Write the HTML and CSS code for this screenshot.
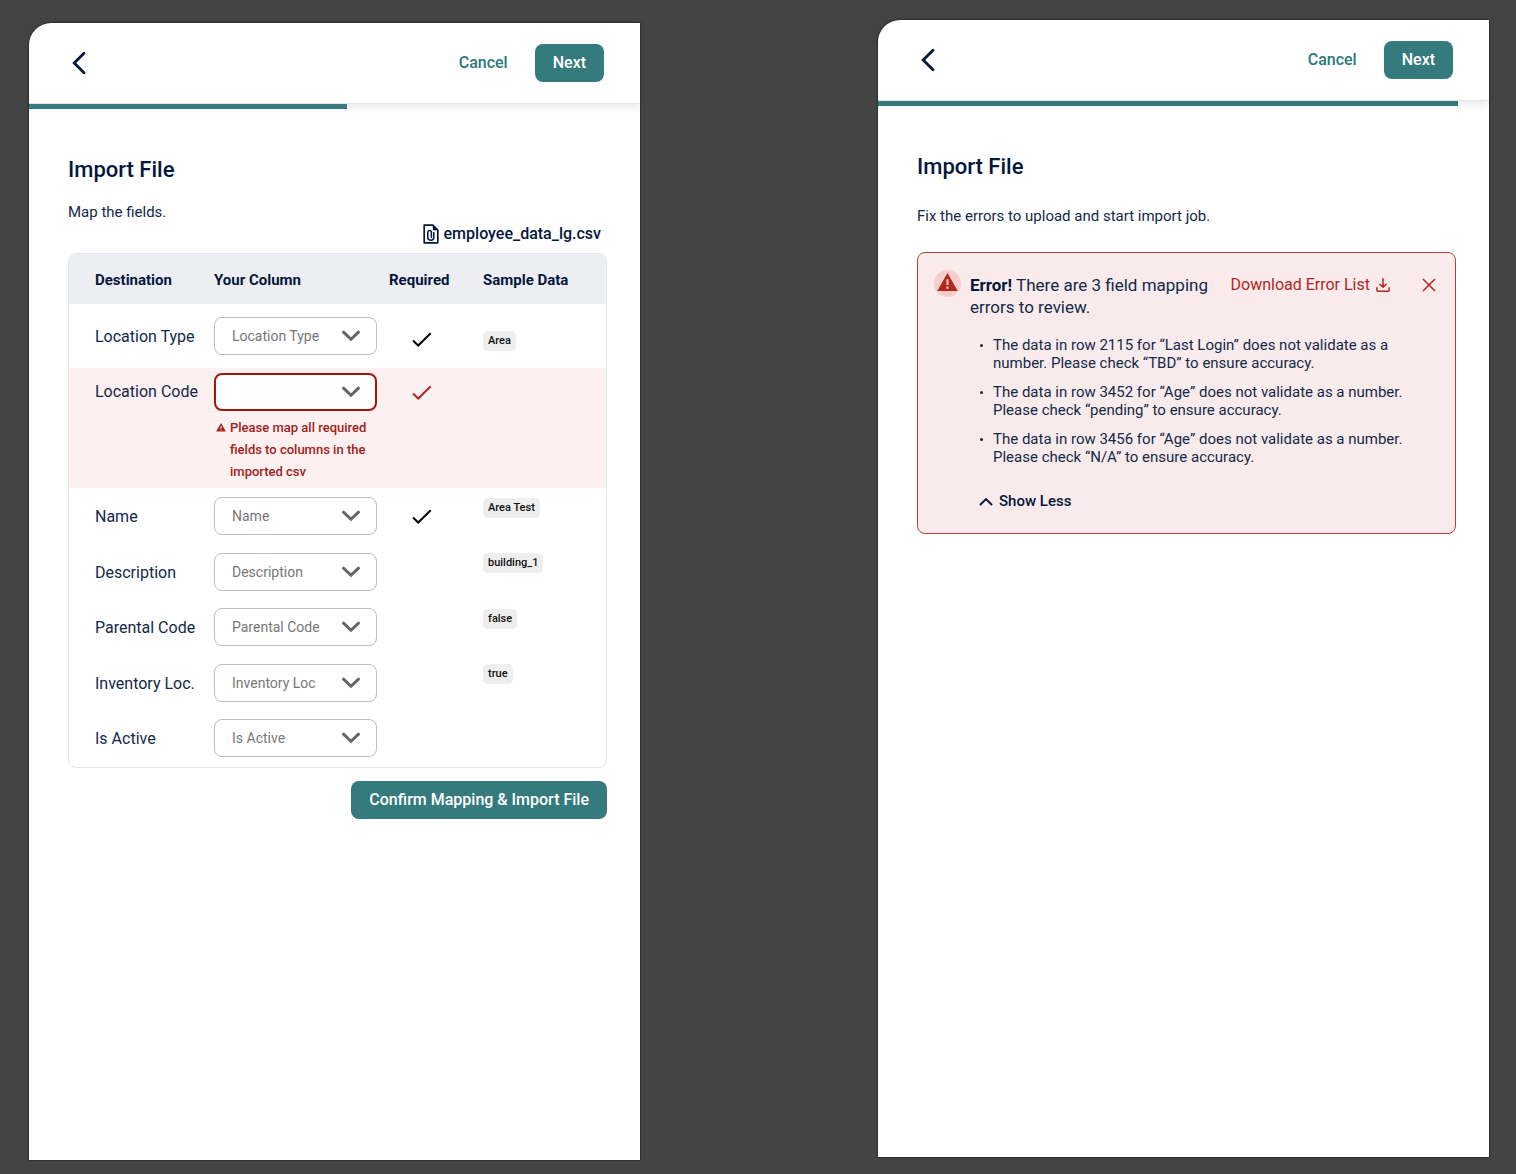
FILE: index.html
```html
<!DOCTYPE html>
<html lang="en">
<head>
  <meta charset="UTF-8" />
  <meta name="viewport" content="width=device-width, initial-scale=1.0"/>
  <title>Import File</title>
  <link rel="stylesheet" href="styles.css">
</head>
<body>
  <!-- shared icons -->
  <svg class="sprite" aria-hidden="true">
    <symbol id="back" viewBox="0 0 16 24"><path d="M13 2.2 3.2 12 13 21.8" fill="none" stroke="currentColor" stroke-width="2.8" stroke-linecap="round"/></symbol>
    <symbol id="chevron" viewBox="0 0 20 12"><path d="M2.5 2.2 10 9.3l7.500-7.100" fill="none" stroke="currentColor" stroke-width="3" stroke-linecap="round"/></symbol>
    <symbol id="check" viewBox="0 0 20 16"><path d="M1 8.600 6.200 13.500 18.700 1.300" fill="none" stroke="currentColor" stroke-width="2"/></symbol>
    <symbol id="warning" viewBox="0 0 22 20"><path fill="currentColor" fill-rule="evenodd" d="M11 0 21.800 19H.2zM9.900 6.500v6h2.200v-6zm0 7.800v2.200h2.200v-2.200z"/></symbol>
  </svg>

  <main class="screens">
    <section class="screen screen-map">
      <header class="topbar">
        <button type="button" class="back" aria-label="Back"><svg width="16" height="24"><use href="#back"/></svg></button>
        <button type="button" class="cancel">Cancel</button>
        <button type="button" class="btn">Next</button>
      </header>
      <div class="progress"><div class="progress-bar" style="width: 52%"></div></div>

      <form class="content">
        <h1>Import File</h1>
        <p>Map the fields.</p>
        <div class="file">
          <svg width="16" height="20" viewBox="0 0 16 20" fill="none" stroke="currentColor">
            <path d="M1.200 1.200h8.600l5 5v12.600H1.200z" stroke-width="1.700" stroke-linejoin="round"/>
            <path d="M9.800 1v5.300h5z" fill="currentColor" stroke="none"/>
            <path d="M10.800 8.500v4.700a3 3 0 0 1-6 0V8.200a1.800 1.800 0 0 1 3.600 0v5" stroke-width="1.500" stroke-linecap="round"/>
          </svg>
          <span>employee_data_lg.csv</span>
        </div>

        <div class="table-box">
          <table>
            <colgroup><col class="col-dest"><col class="col-yours"><col class="col-req"><col></colgroup>
            <thead>
              <tr>
                <th scope="col">Destination</th>
                <th scope="col">Your Column</th>
                <th scope="col">Required</th>
                <th scope="col">Sample Data</th>
              </tr>
            </thead>
            <tbody>
              <tr class="first">
                <th scope="row"><label for="type">Location Type</label></th>
                <td><div class="select"><select id="type"><option>Location Type</option></select><svg width="20" height="12"><use href="#chevron"/></svg></div></td>
                <td class="req"><svg width="20" height="16" role="img" aria-label="Required"><use href="#check"/></svg></td>
                <td class="sample"><span class="chip">Area</span></td>
              </tr>
              <tr class="invalid">
                <th scope="row"><label for="code">Location Code</label></th>
                <td>
                  <div class="select"><select id="code" aria-invalid="true" aria-describedby="code-error"><option></option></select><svg width="20" height="12"><use href="#chevron"/></svg></div>
                  <div class="field-error" id="code-error"><svg width="10" height="9"><use href="#warning"/></svg><span>Please map all required fields to columns in the imported csv</span></div>
                </td>
                <td class="req"><svg width="20" height="16" role="img" aria-label="Required"><use href="#check"/></svg></td>
                <td class="sample"></td>
              </tr>
              <tr>
                <th scope="row"><label for="name">Name</label></th>
                <td><div class="select"><select id="name"><option>Name</option></select><svg width="20" height="12"><use href="#chevron"/></svg></div></td>
                <td class="req"><svg width="20" height="16" role="img" aria-label="Required"><use href="#check"/></svg></td>
                <td class="sample"><span class="chip">Area Test</span></td>
              </tr>
              <tr>
                <th scope="row"><label for="description">Description</label></th>
                <td><div class="select"><select id="description"><option>Description</option></select><svg width="20" height="12"><use href="#chevron"/></svg></div></td>
                <td></td>
                <td class="sample"><span class="chip">building_1</span></td>
              </tr>
              <tr>
                <th scope="row"><label for="parental">Parental Code</label></th>
                <td><div class="select"><select id="parental"><option>Parental Code</option></select><svg width="20" height="12"><use href="#chevron"/></svg></div></td>
                <td></td>
                <td class="sample"><span class="chip">false</span></td>
              </tr>
              <tr>
                <th scope="row"><label for="inventory">Inventory Loc.</label></th>
                <td><div class="select"><select id="inventory"><option>Inventory Loc</option></select><svg width="20" height="12"><use href="#chevron"/></svg></div></td>
                <td></td>
                <td class="sample"><span class="chip">true</span></td>
              </tr>
              <tr>
                <th scope="row"><label for="active">Is Active</label></th>
                <td><div class="select"><select id="active"><option>Is Active</option></select><svg width="20" height="12"><use href="#chevron"/></svg></div></td>
                <td></td>
                <td class="sample"></td>
              </tr>
            </tbody>
          </table>
        </div>
        <div class="actions"><button type="button" class="btn">Confirm Mapping &amp; Import File</button></div>
      </form>
    </section>

    <section class="screen screen-errors">
      <header class="topbar">
        <button type="button" class="back" aria-label="Back"><svg width="16" height="24"><use href="#back"/></svg></button>
        <button type="button" class="cancel">Cancel</button>
        <button type="button" class="btn">Next</button>
      </header>
      <div class="progress"><div class="progress-bar" style="width: 95%"></div></div>

      <div class="content">
        <h1>Import File</h1>
        <p>Fix the errors to upload and start import job.</p>
        <div class="alert" role="alert">
          <div class="alert-head">
            <span class="alert-icon"><svg width="21" height="19"><use href="#warning"/></svg></span>
            <div class="alert-title"><strong>Error!</strong> There are 3 field mapping errors to review.</div>
            <a class="download" href="#">Download Error List
              <svg width="14" height="14" viewBox="0 0 14 14" fill="none" stroke="currentColor" stroke-width="1.500" stroke-linecap="round" stroke-linejoin="round"><path d="M7 .8v8.400M3.800 6.200 7 9.300l3.200-3.100M.9 9.800v2.400q0 1 1 1h10.200q1 0 1-1V9.800"/></svg>
            </a>
            <button type="button" class="close" aria-label="Close"><svg width="14" height="14" viewBox="0 0 14 14"><path d="M1 1l12 12M13 1 1 13" stroke="currentColor" stroke-width="1.500"/></svg></button>
          </div>
          <ul>
            <li>The data in row 2115 for “Last Login” does not validate as a number. Please check “TBD” to ensure accuracy.</li>
            <li>The data in row 3452 for “Age” does not validate as a number. Please check “pending” to ensure accuracy.</li>
            <li>The data in row 3456 for “Age” does not validate as a number. Please check “N/A” to ensure accuracy.</li>
          </ul>
          <button type="button" class="toggle"><svg width="14" height="9" viewBox="0 0 14 9"><path d="M1.500 7.500 7 2l5.500 5.500" fill="none" stroke="currentColor" stroke-width="1.900" stroke-linecap="round"/></svg>Show Less</button>
        </div>
      </div>
    </section>
  </main>
</body>
</html>
```
FILE: styles.css
```css
* {
  box-sizing: border-box;
}
body {
  margin: 0;
  background-color: #444444;
  color: #12294a;
  font-family: Roboto, sans-serif;
  font-size: 16px;
  line-height: 22px;
}
button, select {
  font: inherit;
  color: inherit;
  margin: 0;
  padding: 0;
  border: none;
  background: none;
  cursor: pointer;
}
svg {
  display: block;
  flex: none;
}
.sprite {
  position: absolute;
  width: 0;
  height: 0;
}

.screens {
  display: flex;
  gap: 238px;
  min-height: 100vh;
  padding: 20px 27px 14px 29px;
}
.screen {
  flex: 1;
  min-width: 0;
  background-color: #fff;
  border-top-left-radius: 22px;
  box-shadow: 0 0 2px #000;
}
.screen-map {
  margin-top: 3px;
}
.screen-errors {
  margin-bottom: 3px;
}

/* top bar */
.topbar {
  display: flex;
  align-items: center;
  height: 81px;
  padding: 0 36px 0 42px;
  border-bottom: 1px solid #e6e7eb;
  box-shadow: 0 3px 8px rgba(20, 30, 50, 0.1);
}
.back {
  margin-right: auto;
  color: #04173d;
}
.cancel {
  margin-right: 27px;
  color: #2b7a78;
  font-weight: 500;
}
.btn {
  height: 38px;
  padding: 0 18px;
  border-radius: 8px;
  background-color: #357a7c;
  color: #fff;
  font-weight: 500;
}
.progress {
  height: 5px;
}
.progress-bar {
  position: relative;
  height: 100%;
  background-color: #357a7c;
}

.content {
  padding: 46px 33px 40px 39px;
}
h1 {
  margin: 0;
  color: #04173d;
  font-size: 22px;
  font-weight: 500;
  line-height: 30px;
}
p {
  margin: 16px 0 0;
  font-size: 15px;
}
.file {
  display: flex;
  justify-content: flex-end;
  align-items: center;
  gap: 5px;
  margin-bottom: 8px;
  padding-right: 6px;
  color: #04173d;
  font-weight: 500;
}

/* mapping table */
.table-box {
  overflow: hidden;
  padding-bottom: 1px;
  border: 1px solid #e3e6ea;
  border-radius: 8px;
}
table {
  width: 100%;
  table-layout: fixed;
  border-collapse: collapse;
}
.col-dest { width: 145px; }
.col-yours { width: 175px; }
.col-req { width: 94px; }
th, td {
  padding: 0;
  text-align: left;
  font-weight: 400;
}
th:first-child {
  padding-left: 26px;
}
thead th {
  height: 50px;
  padding-top: 2px;
  background-color: #edeef2;
  color: #04173d;
  font-size: 15px;
  font-weight: 700;
}
tbody tr {
  height: 56px;
}
tbody tr:nth-child(even) {
  height: 55px;
}
tbody .first {
  height: 64px;
}
tbody th {
  padding-top: 2px;
}
.first .req, .first .sample {
  padding-top: 8px;
}
.req {
  padding-top: 2px;
  padding-left: 23px;
  color: #000;
}
.sample {
  padding-bottom: 18px;
}
.first .sample {
  padding-bottom: 0;
}
.chip {
  display: inline-block;
  padding: 0 5px;
  border-radius: 5px;
  background-color: #eeeeee;
  color: #111;
  font-size: 11px;
  font-weight: 500;
  line-height: 20px;
  vertical-align: middle;
}
.select {
  display: grid;
  align-items: center;
  width: 163px;
}
.select select, .select svg {
  grid-area: 1 / 1;
}
.select select {
  appearance: none;
  width: 100%;
  height: 38px;
  padding: 0 40px 0 17px;
  border: 1px solid #b9bdc6;
  border-radius: 8px;
  background-color: #fff;
  color: #777;
  font-size: 14px;
}
.select svg {
  justify-self: end;
  margin-right: 16px;
  color: #666;
  pointer-events: none;
}
.invalid {
  background-color: #fdf0f0;
}
.invalid th, .invalid td {
  padding-top: 5px;
  padding-bottom: 5px;
  vertical-align: top;
}
.invalid label {
  line-height: 38px;
}
.invalid select {
  border: 2px solid #a3150e;
}
.invalid td.req {
  padding-top: 17px;
  color: #b3261e;
}
.field-error {
  display: flex;
  gap: 4px;
  width: 163px;
  margin-top: 6px;
  padding-left: 2px;
  color: #a3201a;
  font-size: 13px;
  font-weight: 500;
}
.field-error svg {
  margin-top: 6px;
}
.actions {
  display: flex;
  justify-content: flex-end;
  margin-top: 13px;
}

/* error summary */
.screen-errors p {
  margin: 23px 0 25px;
}
.alert {
  padding: 21px 19px 21px 16px;
  border: 1px solid #b5403c;
  border-radius: 8px;
  background-color: #f9ebeb;
}
.alert-head {
  display: flex;
  align-items: flex-start;
}
.alert-icon {
  display: grid;
  place-items: center;
  width: 27px;
  height: 27px;
  margin: -4px 9px 0 0;
  border-radius: 50%;
  background-color: #f6cdc9;
  color: #ae2a20;
}
.alert-icon svg {
  margin-bottom: 2px;
}
.alert-title {
  flex: 1;
  margin-right: 20px;
  font-size: 17px;
}
strong {
  color: #04173d;
}
.download {
  display: flex;
  align-items: center;
  gap: 6px;
  color: #b3261e;
  font-weight: 400;
  text-decoration: none;
}
.close {
  margin: 4px 0 0 32px;
  color: #b3261e;
}
.alert ul {
  display: grid;
  gap: 11px;
  margin: 18px 18px 24px 59px;
  padding: 0;
  list-style: none;
  font-size: 15px;
  line-height: 18px;
}
.alert li {
  display: flex;
}
.alert li::before {
  content: "";
  flex: none;
  width: 3px;
  height: 3px;
  margin: 8px 10px 0 -13px;
  border-radius: 50%;
  background-color: #12294a;
}
.toggle {
  display: flex;
  align-items: center;
  gap: 6px;
  margin-left: 45px;
  color: #04173d;
  font-size: 15px;
  font-weight: 500;
}
```
